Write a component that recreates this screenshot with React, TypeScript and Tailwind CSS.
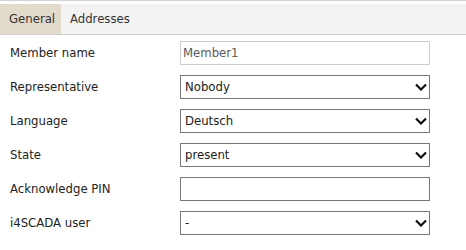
import { ReactNode } from "react";

function Chevron() {
  return (
    <svg width="12" height="8" viewBox="0 0 12 8" className="absolute right-[2px] top-[7px]">
      <path d="M1 1.5 L6 6.5 L11 1.5" fill="none" stroke="#111" strokeWidth="2.2" />
    </svg>
  );
}

function Row({ label, children }: { label: string; children: ReactNode }) {
  return (
    <div className="flex items-center h-6">
      <div className="w-[180px] pl-[10px] text-[#222]">{label}</div>
      {children}
    </div>
  );
}

function Select({ value }: { value: string }) {
  return (
    <div className="relative w-[250px] h-6 border border-[#767676] bg-white pl-[4px] flex items-center text-[#222]">
      {value}
      <Chevron />
    </div>
  );
}

export default function App() {
  return (
    <div
      className="w-[466px] h-[250px] bg-white text-[13px]"
      style={{ fontFamily: '"DejaVu Sans Condensed", "DejaVu Sans", sans-serif' }}
    >
      <div className="border-t border-[#d2d2d2] pt-[3px]">
        <div className="flex h-[31px] bg-[#f3f3f3] border-b border-[#cfcfcf] text-[#333]">
          <div className="w-[61px] pl-[9px] flex items-center bg-[#e2dacb]">General</div>
          <div className="pl-[9px] flex items-center">Addresses</div>
        </div>
      </div>
      <div className="pt-[6px] flex flex-col gap-[10px]">
        <Row label="Member name">
          <div className="w-[250px] h-6 border border-[#cccccc] bg-white pl-[2px] flex items-center text-[#5a5a5a]">
            Member1
          </div>
        </Row>
        <Row label="Representative">
          <Select value="Nobody" />
        </Row>
        <Row label="Language">
          <Select value="Deutsch" />
        </Row>
        <Row label="State">
          <Select value="present" />
        </Row>
        <Row label="Acknowledge PIN">
          <div className="w-[250px] h-6 border border-[#767676] bg-white" />
        </Row>
        <Row label="i4SCADA user">
          <Select value="-" />
        </Row>
      </div>
    </div>
  );
}
